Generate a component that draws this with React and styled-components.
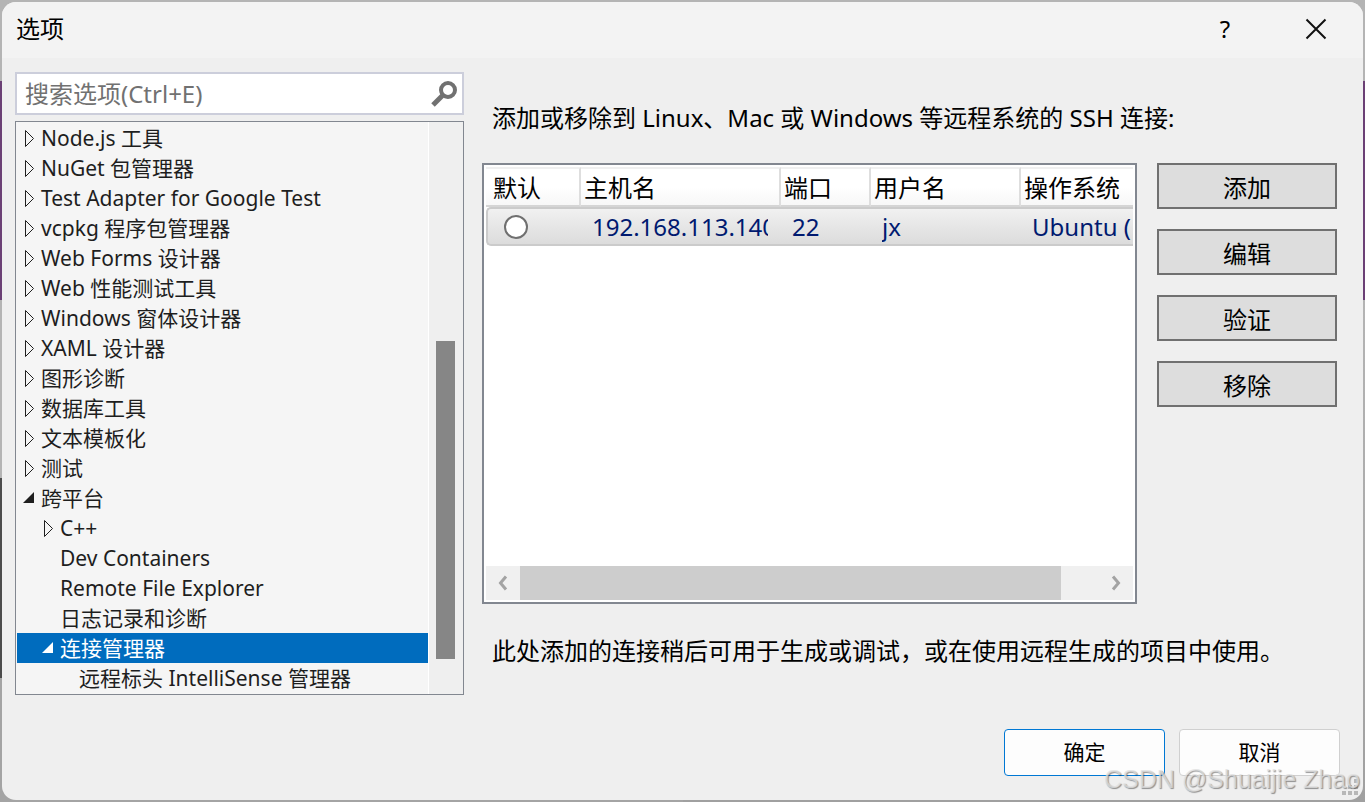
import React, { useState } from "react";
import styled, { createGlobalStyle } from "styled-components";

const Global = createGlobalStyle`
  *, *::before, *::after { box-sizing: border-box; }
  body {
    margin: 0;
    font-family: "Noto Sans", "Noto Sans CJK SC", sans-serif;
    color: #000;
  }
  h1, p, ul { margin: 0; padding: 0; }
  button, input { font: inherit; color: inherit; }
`;

const Desktop = styled.div`
  display: flex;
  min-height: 100vh;
  padding: 2px;
  background:
    linear-gradient(#b4b4b4 0 81px, #6b4075 81px 300px, #b4b4b4 300px, #a0a0a0)
      right / 50% 100% no-repeat,
    linear-gradient(
      #b4b4b4 0 81px,
      #6b4075 81px 300px,
      #b4b4b4 300px 478px,
      #4c4c4c 478px 678px,
      #a4a4a4 678px
    );
`;

const Dialog = styled.section`
  position: relative;
  display: flex;
  flex-direction: column;
  flex: 1;
  min-width: 0;
  background: #efefef;
  border-radius: 14px;
  overflow: hidden;
`;

const TitleBar = styled.header`
  display: flex;
  align-items: center;
  height: 56px;
  padding: 0 24px 2px 14px;
  background: #f3f3f3;
`;

const Title = styled.h1`
  flex: 1;
  font-size: 24px;
  line-height: 32px;
  font-weight: 400;
`;

const CaptionButton = styled.button`
  display: grid;
  place-items: center;
  width: 46px;
  height: 46px;
  margin-left: 45px;
  padding: 0;
  border: 0;
  background: transparent;
  font-size: 24px;
  line-height: 32px;
`;

const Main = styled.div`
  display: grid;
  grid-template-columns: minmax(0, 449fr) minmax(0, 855fr);
  gap: 18px;
  flex: 1;
  padding: 14px 26px 0 13px;
`;

const Sidebar = styled.div`
  display: flex;
  flex-direction: column;
  gap: 6px;
`;

const SearchBox = styled.form`
  display: flex;
  align-items: center;
  height: 43px;
  padding: 0 5px 0 8px;
  border: 2px solid #cccedb;
  background: #fff;
`;

const SearchInput = styled.input`
  flex: 1;
  min-width: 0;
  padding: 0;
  border: 0;
  outline: 0;
  background: transparent;
  font-size: 24px;
  line-height: 32px;
  &::placeholder { color: #717171; opacity: 1; }
`;

const IconButton = styled.button`
  display: grid;
  padding: 0;
  border: 0;
  background: transparent;
`;

const TreePane = styled.div`
  display: flex;
  flex: 1;
  border: 1px solid #828790;
  background: #f5f5f5;
`;

const Tree = styled.ul`
  flex: 1;
  min-width: 0;
  padding: 1px 0 1px 1px;
  list-style: none;
`;

const TreeRow = styled.li`
  display: flex;
  align-items: center;
  height: 30px;
  padding-left: ${(p) => 5 + p.$level * 19}px;
  color: ${(p) => (p.$selected ? "#fff" : "#1e1e1e")};
  background: ${(p) => (p.$selected ? "#006cbe" : "transparent")};
  font-size: 21px;
  line-height: 30px;
  white-space: nowrap;
`;

const Twisty = styled.svg`
  flex: none;
  width: 19px;
  height: 19px;
`;

const TreeScroll = styled.div`
  display: flex;
  flex-direction: column;
  width: 35px;
  padding: 0 8px 0 7px;
  border-left: 1px solid #fff;
  background: #efefef;
`;

const Space = styled.div`
  flex: ${(p) => p.$grow};
`;

const TreeThumb = styled.div`
  flex: 318;
  background: #868686;
`;

const Page = styled.div`
  display: flex;
  flex-direction: column;
  font-size: 24px;
  line-height: 34px;
`;

const Intro = styled.p`
  padding: 29px 10px 28px;
  white-space: nowrap;
`;

const Note = styled.p`
  padding: 30px 10px 27px;
  white-space: nowrap;
`;

const Connections = styled.div`
  display: flex;
  flex: 1;
  gap: 20px;
`;

const ListBox = styled.div`
  display: flex;
  flex-direction: column;
  flex: 1;
  min-width: 0;
  padding: 2px;
  border: 2px solid #828790;
  background: #fff;
`;

const ListClip = styled.div`
  flex: 1;
  overflow: hidden;
`;

const Table = styled.table`
  width: 780px;
  table-layout: fixed;
  border-collapse: separate;
  border-spacing: 0;
`;

const HeadCell = styled.th`
  width: ${(p) => p.$width}px;
  height: 40px;
  padding: 2px 0 0 ${(p) => (p.$first ? 7 : 3)}px;
  border-right: 2px solid #dedede;
  border-top: 2px solid #f0f0f0;
  border-bottom: 2px solid #d5d5d5;
  background: linear-gradient(#fff 50%, #f7f7f7);
  font-weight: 400;
  line-height: 32px;
  text-align: left;
`;

const Cell = styled.td`
  height: 39px;
  padding: 0 13px 0 11px;
  overflow: hidden;
  border: solid #cbcbcb;
  border-width: ${(p) => (p.$first ? "2px 0 2px 2px" : "2px 0")};
  border-radius: ${(p) => (p.$first ? "5px 0 0 5px" : "0")};
  background: linear-gradient(#f1f1f1, #e6e6e6 50%, #dcdcdc);
  color: #001a70;
  line-height: 34px;
`;

const CellText = styled.div`
  overflow: hidden;
  white-space: nowrap;
`;

const Radio = styled.input`
  appearance: none;
  display: block;
  width: 24px;
  height: 24px;
  margin: 0 0 0 5px;
  border: 2px solid #707070;
  border-radius: 50%;
  background: #fff;
  &:checked { background: radial-gradient(#333 0 5px, #fff 6px); }
`;

const HScroll = styled.div`
  display: flex;
  height: 34px;
  background: #f0f0f0;
`;

const ScrollArrow = styled.button`
  display: grid;
  place-items: center;
  width: 34px;
  padding: 0;
  border: 0;
  background: transparent;
`;

const HThumb = styled.div`
  flex: 541;
  background: #cdcdcd;
`;

const Actions = styled.div`
  display: flex;
  flex-direction: column;
  gap: 20px;
  width: 180px;
`;

const ActionButton = styled.button`
  height: 46px;
  padding: 4px 0 0;
  border: 2px solid #707070;
  background: #ddd;
  font-size: 24px;
  line-height: 32px;
`;

const Footer = styled.footer`
  display: flex;
  justify-content: flex-end;
  gap: 14px;
  padding: 34px 23px 24px;
`;

const FooterButton = styled.button`
  width: 161px;
  height: 47px;
  padding: 0 0 2px;
  border: 1px solid ${(p) => (p.$primary ? "#0078d4" : "#d0d0d0")};
  border-radius: 4px;
  background: #fdfdfd;
  font-size: 21px;
  line-height: 30px;
`;

const Grip = styled.svg`
  position: absolute;
  right: 4px;
  bottom: 4px;
`;

const Watermark = styled.div`
  position: absolute;
  right: 3px;
  bottom: 6px;
  color: rgba(225, 225, 225, 0.75);
  font-family: "Liberation Sans", sans-serif;
  font-size: 25px;
  line-height: 30px;
  text-shadow: 1px 1px 1px rgba(0, 0, 0, 0.4);
  pointer-events: none;
`;

const options = [
  { label: "Node.js 工具", state: "closed" },
  { label: "NuGet 包管理器", state: "closed" },
  { label: "Test Adapter for Google Test", state: "closed" },
  { label: "vcpkg 程序包管理器", state: "closed" },
  { label: "Web Forms 设计器", state: "closed" },
  { label: "Web 性能测试工具", state: "closed" },
  { label: "Windows 窗体设计器", state: "closed" },
  { label: "XAML 设计器", state: "closed" },
  { label: "图形诊断", state: "closed" },
  { label: "数据库工具", state: "closed" },
  { label: "文本模板化", state: "closed" },
  { label: "测试", state: "closed" },
  { label: "跨平台", state: "open" },
  { label: "C++", state: "closed", level: 1 },
  { label: "Dev Containers", level: 1 },
  { label: "Remote File Explorer", level: 1 },
  { label: "日志记录和诊断", level: 1 },
  { label: "连接管理器", state: "open", level: 1, selected: true },
  { label: "远程标头 IntelliSense 管理器", level: 2 },
];

const columns = [
  { label: "默认", width: 95 },
  { label: "主机名", width: 200 },
  { label: "端口", width: 90 },
  { label: "用户名", width: 150 },
  { label: "操作系统", width: 245 },
];

const connection = ["192.168.113.140", "22", "jx", "Ubuntu ("];

function Arrow({ state }) {
  return (
    <Twisty viewBox="0 0 19 19" aria-hidden="true">
      {state === "closed" && (
        <path d="M3.5 1.5V17.5L11.5 9.5Z" fill="none" stroke="currentColor" />
      )}
      {state === "open" && <path d="M12 3V14H1Z" fill="currentColor" />}
    </Twisty>
  );
}

export default function App() {
  const [query, setQuery] = useState("");
  const [isDefault, setIsDefault] = useState(false);
  return (
    <>
      <Global />
      <Desktop>
        <Dialog role="dialog" aria-labelledby="dialog-title">
          <TitleBar>
            <Title id="dialog-title">选项</Title>
            <CaptionButton type="button" aria-label="帮助">?</CaptionButton>
            <CaptionButton type="button" aria-label="关闭">
              <svg width="22" height="22" viewBox="0 0 22 22" aria-hidden="true">
                <path d="M1.5 1.5L20.5 20.5M20.5 1.5L1.5 20.5" stroke="#111" strokeWidth="2" />
              </svg>
            </CaptionButton>
          </TitleBar>
          <Main>
            <Sidebar>
              <SearchBox role="search" onSubmit={(e) => e.preventDefault()}>
                <SearchInput
                  type="text"
                  aria-label="搜索选项"
                  placeholder="搜索选项(Ctrl+E)"
                  value={query}
                  onChange={(e) => setQuery(e.target.value)}
                />
                <IconButton type="submit" aria-label="搜索">
                  <svg width="26" height="26" viewBox="0 0 26 26" aria-hidden="true">
                    <circle cx="17" cy="9" r="7" fill="none" stroke="#717171" strokeWidth="4" />
                    <path d="M12 14L2 24" stroke="#717171" strokeWidth="5" />
                  </svg>
                </IconButton>
              </SearchBox>
              <TreePane>
                <Tree role="tree" aria-label="选项">
                  {options.map((o) => (
                    <TreeRow
                      key={o.label}
                      role="treeitem"
                      aria-level={(o.level || 0) + 1}
                      aria-selected={!!o.selected}
                      aria-expanded={o.state ? o.state === "open" : undefined}
                      $level={o.level || 0}
                      $selected={o.selected}
                    >
                      <Arrow state={o.state} />
                      {o.label}
                    </TreeRow>
                  ))}
                </Tree>
                <TreeScroll>
                  <Space $grow={219} />
                  <TreeThumb />
                  <Space $grow={35} />
                </TreeScroll>
              </TreePane>
            </Sidebar>
            <Page>
              <Intro>添加或移除到 Linux、Mac 或 Windows 等远程系统的 SSH 连接:</Intro>
              <Connections>
                <ListBox>
                  <ListClip>
                    <Table>
                      <thead>
                        <tr>
                          {columns.map((c, i) => (
                            <HeadCell key={c.label} scope="col" $width={c.width} $first={i === 0}>
                              {c.label}
                            </HeadCell>
                          ))}
                        </tr>
                      </thead>
                      <tbody>
                        <tr>
                          <Cell $first>
                            <Radio
                              type="radio"
                              name="default-connection"
                              aria-label="默认"
                              checked={isDefault}
                              onChange={() => setIsDefault(true)}
                            />
                          </Cell>
                          {connection.map((value) => (
                            <Cell key={value}>
                              <CellText>{value}</CellText>
                            </Cell>
                          ))}
                        </tr>
                      </tbody>
                    </Table>
                  </ListClip>
                  <HScroll>
                    <ScrollArrow type="button" aria-label="向左滚动">
                      <svg width="10" height="16" viewBox="0 0 10 16" aria-hidden="true">
                        <path d="M8 1.5L2.5 8L8 14.5" fill="none" stroke="#a3a3a3" strokeWidth="3" />
                      </svg>
                    </ScrollArrow>
                    <HThumb />
                    <Space $grow={38} />
                    <ScrollArrow type="button" aria-label="向右滚动">
                      <svg width="10" height="16" viewBox="0 0 10 16" aria-hidden="true">
                        <path d="M2 1.5L7.5 8L2 14.5" fill="none" stroke="#a3a3a3" strokeWidth="3" />
                      </svg>
                    </ScrollArrow>
                  </HScroll>
                </ListBox>
                <Actions>
                  {["添加", "编辑", "验证", "移除"].map((label) => (
                    <ActionButton key={label} type="button">{label}</ActionButton>
                  ))}
                </Actions>
              </Connections>
              <Note>此处添加的连接稍后可用于生成或调试，或在使用远程生成的项目中使用。</Note>
            </Page>
          </Main>
          <Footer>
            <FooterButton type="button" $primary>确定</FooterButton>
            <FooterButton type="button">取消</FooterButton>
          </Footer>
          <Grip width="17" height="17" viewBox="0 0 17 17" fill="#b8b8b8" aria-hidden="true">
            <path d="M12 0h4v4h-4zM6 6h4v4h-4zM12 6h4v4h-4zM0 12h4v4H0zM6 12h4v4H6zM12 12h4v4h-4z" />
          </Grip>
          <Watermark>CSDN @Shuaijie Zhao</Watermark>
        </Dialog>
      </Desktop>
    </>
  );
}
